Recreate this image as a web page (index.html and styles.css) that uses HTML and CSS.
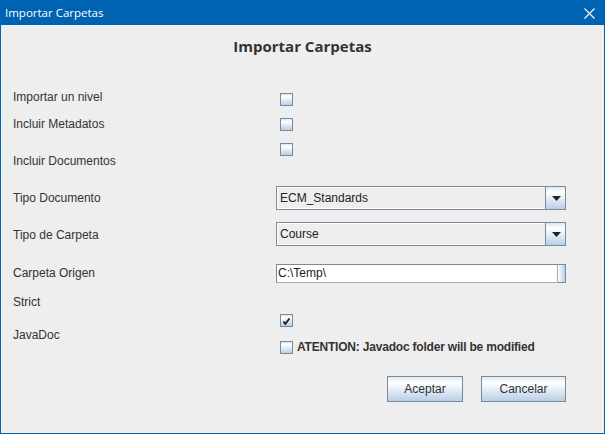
FILE: index.html
```html
<!DOCTYPE html>
<html lang="es">
<head>
<meta charset="utf-8">
<title>Importar Carpetas</title>
<link rel="stylesheet" href="styles.css">
</head>
<body>
<div class="window">
  <div class="titlebar">
    <span class="title-text">Importar Carpetas</span>
    <svg class="close" width="11" height="11" viewBox="0 0 11 11"><path d="M0.5 0.5 L10.5 10.5 M10.5 0.5 L0.5 10.5" stroke="#fff" stroke-width="1.1" fill="none"/></svg>
  </div>
  <div class="content">
    <h1 class="heading">Importar Carpetas</h1>
    <div class="form">
      <div class="row r1">
        <div class="label">Importar un nivel</div>
        <div class="ctrl"><span class="cb"></span></div>
      </div>
      <div class="row r2">
        <div class="label">Incluir Metadatos</div>
        <div class="ctrl"><span class="cb"></span></div>
      </div>
      <div class="row r3">
        <div class="label">Incluir Documentos</div>
        <div class="ctrl"><span class="cb"></span></div>
      </div>
      <div class="row r4">
        <div class="label">Tipo Documento</div>
        <div class="ctrl">
          <div class="combo"><span class="combo-text">ECM_Standards</span><span class="combo-btn"><svg width="9" height="5" viewBox="0 0 9 5"><path d="M0 0 H9 L4.5 5 Z" fill="#222"/></svg></span></div>
        </div>
      </div>
      <div class="row r5">
        <div class="label">Tipo de Carpeta</div>
        <div class="ctrl">
          <div class="combo"><span class="combo-text">Course</span><span class="combo-btn"><svg width="9" height="5" viewBox="0 0 9 5"><path d="M0 0 H9 L4.5 5 Z" fill="#222"/></svg></span></div>
        </div>
      </div>
      <div class="row r6">
        <div class="label">Carpeta Origen</div>
        <div class="ctrl">
          <div class="field-wrap"><span class="field">C:\Temp\</span><span class="field-btn"></span></div>
        </div>
      </div>
      <div class="row r7">
        <div class="label">Strict</div>
      </div>
      <div class="row r8">
        <div class="label">JavaDoc</div>
        <div class="ctrl stack">
          <span class="cb checked"><svg width="11" height="11" viewBox="0 0 11 11"><path d="M2.5 6.5 L4.3 8.8 L8.5 3.5" stroke="#222" stroke-width="2" fill="none"/></svg></span>
          <div class="attention"><span class="cb"></span><span class="att-text">ATENTION: Javadoc folder will be modified</span></div>
        </div>
      </div>
    </div>
    <div class="buttons">
      <button class="btn btn-ok">Aceptar</button>
      <button class="btn btn-cancel">Cancelar</button>
    </div>
  </div>
</div>
</body>
</html>
```

FILE: styles.css
```css
* { box-sizing: border-box; }
html, body { margin: 0; padding: 0; }
body {
  width: 605px;
  height: 434px;
  background: #eeeeee;
  font-family: "Liberation Sans", Arial, sans-serif;
  font-size: 12px;
  color: #333333;
  overflow: hidden;
}
.window {
  width: 605px;
  height: 434px;
  border: 1px solid #0063b1;
  border-top: 0;
  background: #eeeeee;
  display: flex;
  flex-direction: column;
}
.titlebar {
  height: 25px;
  margin: 0 -1px;
  background: #0063b1;
  display: flex;
  align-items: center;
  justify-content: space-between;
  padding: 0 10px 0 5px;
  color: #ffffff;
}
.title-text {
  font-family: "Open Sans", "Noto Sans", sans-serif;
  font-size: 11.5px;
  line-height: 16px;
  margin-top: 1px;
}
.close { display: block; margin-top: 1px; }
.content {
  flex: 1;
  padding: 0 0 0 12px;
  display: flex;
  flex-direction: column;
}
.heading {
  margin: 11px 0 0 0;
  font-family: "Open Sans", "Noto Sans", sans-serif;
  font-weight: 700;
  font-size: 15px;
  line-height: 20px;
  height: 20px;
  text-align: center;
  color: #333333;
  padding-right: 12px;
}
.form {
  margin-top: 32px;
  display: flex;
  flex-direction: column;
}
.row {
  display: flex;
  align-items: flex-start;
}
.label {
  width: 263px;
  line-height: 14px;
  white-space: nowrap;
}
.ctrl { display: flex; }
.cb {
  display: inline-flex;
  align-items: center;
  justify-content: center;
  width: 13px;
  height: 13px;
  border: 1px solid #7a8a99;
  background: linear-gradient(#dde8f3 0%, #ffffff 25%, #b8cfe5 100%);
  margin-left: 4px;
  flex: none;
}
.r1 { height: 27px; }
.r1 .label { margin-top: 2px; }
.r1 .ctrl { margin-top: 5px; }
.r2 { height: 25px; }
.r2 .label { margin-top: 2px; }
.r2 .ctrl { margin-top: 3px; }
.r3 { height: 40px; }
.r3 .label { margin-top: 14px; }
.r3 .ctrl { margin-top: 3px; }
.r4 { height: 38px; }
.r4 .label { margin-top: 11px; }
.r4 .ctrl { margin-top: 6px; }
.r5 { height: 38px; }
.r5 .label { margin-top: 10px; }
.r5 .ctrl { margin-top: 4px; }
.r6 { height: 34px; }
.r6 .label { margin-top: 10px; }
.r6 .ctrl { margin-top: 8px; }
.r7 { height: 18px; }
.r7 .label { margin-top: 5px; }
.r8 { height: 60px; }
.r8 .label { margin-top: 20px; }
.r8 .ctrl { margin-top: 6px; }
.stack { flex-direction: column; }
.attention {
  display: flex;
  align-items: center;
  height: 14px;
  margin-top: 13px;
}
.att-text {
  font-weight: 700;
  margin-left: 4px;
  line-height: 14px;
  letter-spacing: -0.2px;
  white-space: nowrap;
}
.combo {
  width: 290px;
  height: 24px;
  border: 1px solid #7a8a99;
  display: flex;
  background: #eeeeee;
}
.combo-text {
  flex: 1;
  border: 1px solid #ffffff;
  border-right: 0;
  padding-left: 2px;
  line-height: 20px;
  color: #222;
}
.combo-btn {
  width: 20px;
  border-left: 1px solid #7a8a99;
  background: linear-gradient(#dde8f3 0%, #ffffff 25%, #b8cfe5 100%);
  display: flex;
  align-items: center;
  justify-content: center;
  padding-left: 1px;
}
.combo-btn svg { display: block; }
.field-wrap {
  display: flex;
  height: 19px;
}
.field {
  width: 282px;
  height: 19px;
  border: 1px solid #7a8a99;
  border-right-color: #a3b1bf;
  border-bottom-color: #a3b1bf;
  background: #ffffff;
  padding-left: 1px;
  line-height: 17px;
  color: #222;
}
.field-btn {
  width: 8px;
  height: 19px;
  border: 1px solid #7a8a99;
  border-left: 0;
  background: linear-gradient(90deg, #ffffff 0%, #b8cfe5 100%);
}
.buttons {
  margin-top: 8px;
  display: flex;
  justify-content: flex-end;
  gap: 18px;
  padding-right: 38px;
}
.btn {
  height: 26px;
  border: 1px solid #7a8a99;
  background: linear-gradient(#dde8f3 0%, #ffffff 25%, #b8cfe5 100%);
  font-family: "Liberation Sans", Arial, sans-serif;
  font-size: 12px;
  color: #333333;
  padding: 0;
  margin: 0;
}
.btn-ok { width: 76px; }
.btn-cancel { width: 85px; }
```
